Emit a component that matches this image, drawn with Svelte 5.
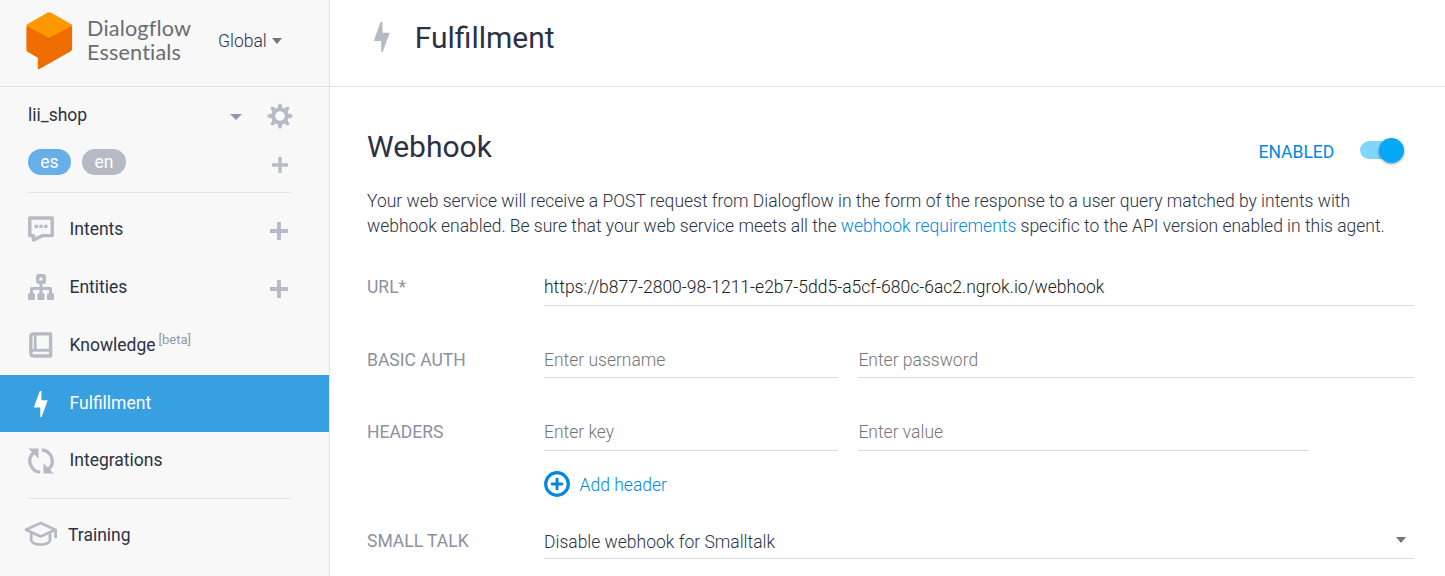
<script>
  const agentNav = [
    { id: 'intents', label: 'Intents', add: true },
    { id: 'entities', label: 'Entities', add: true },
    { id: 'knowledge', label: 'Knowledge', beta: true },
    { id: 'fulfillment', label: 'Fulfillment', active: true },
    { id: 'integrations', label: 'Integrations' }
  ];
  let url = $state('https://b877-2800-98-1211-e2b7-5dd5-a5cf-680c-6ac2.ngrok.io/webhook');
  const teeth = [0, 45, 90, 135, 180, 225, 270, 315];
</script>

{#snippet bolt()}
  <svg class="bolt" viewBox="0 0 16 30"><path d="M6.6 0H8.5v10.8h7.2L8.7 30H7.2V19H.2L0 18.2z" /></svg>
{/snippet}

{#snippet plus()}
  <svg class="plus" viewBox="0 0 18 18"><path d="M9 0v18M0 9h18" /></svg>
{/snippet}

{#snippet navIcon(id)}
  {#if id === 'intents'}
    <svg width="26" height="26" viewBox="0 0 26 26">
      <path d="M1.8 2h22.4v17.6H14.5L5.5 24v-4.4H1.8z" fill="none" stroke="currentColor" stroke-width="3.4" stroke-linejoin="round" />
      <path d="M6.6 8.8h3.4v3.3H6.6zM11.4 8.8h3.4v3.3h-3.4zM16.1 8.8h3.4v3.3h-3.4z" fill="currentColor" />
    </svg>
  {:else if id === 'entities'}
    <svg width="26" height="26" viewBox="0 0 26 26">
      <g fill="none" stroke="currentColor" stroke-width="3">
        <rect x="9.8" y="1.7" width="6.4" height="6.6" rx=".6" stroke-width="3.4" />
        <path d="M13 9v11M3.5 20v-5.5h19V20" stroke-linejoin="round" />
      </g>
      <g fill="currentColor">
        <rect x="0" y="19" width="7" height="7" rx="1.5" /><rect x="9.5" y="19" width="7" height="7" rx="1.5" /><rect x="19" y="19" width="7" height="7" rx="1.5" />
      </g>
    </svg>
  {:else if id === 'knowledge'}
    <svg width="26" height="26" viewBox="0 0 26 26">
      <g fill="none" stroke="currentColor">
        <path d="M22.6 1.9H5.2Q2.8 1.9 2.8 4.8v16q0 3.2 2.8 3.2h17z" stroke-width="3.4" stroke-linejoin="round" />
        <path d="M3 18.3h20" stroke-width="2.8" /><path d="M7.2 2v16" stroke-width="2.8" />
      </g>
    </svg>
  {:else if id === 'fulfillment'}
    {@render bolt()}
  {:else if id === 'integrations'}
    <svg width="26" height="26" viewBox="0 0 26 26">
      <g fill="none" stroke="currentColor" stroke-width="3.3">
        <path d="M12.2 24.2A11.3 11.3 0 0 1 6 4.2" /><path d="M13.8 1.8A11.3 11.3 0 0 1 20 21.8" />
      </g>
      <path d="M.3.4h10.2v10.3zM15.5 15.3v10.3h10.2z" fill="currentColor" />
    </svg>
  {/if}
{/snippet}

<div class="app">
  <aside>
    <header class="brand">
      <svg class="logo" width="47" height="58" viewBox="0 0 47 58">
        <path fill="#ef6c00" d="M.4 14.5v23.2q0 1.4 1.2 2.1l10.2 5.9V56q0 1.8 1.6 1L44.7 39.2q1.4-.8 1.4-2.4V14.5L23.2 5z" />
        <path fill="#ff9800" d="M.4 13.6q0-.8.8-1.3L21.8.6q1.5-.8 3 0l20.5 11.7q1.5.9 0 1.7L23.2 26.1 1 14.3z" />
      </svg>
      <div class="wordmark"><span>Dialogflow</span><span>Essentials</span></div>
      <button class="region">Global</button>
      <i class="caret region-caret"></i>
    </header>

    <div class="agent">
      <span class="agent-name">lii_shop</span>
      <i class="caret agent-caret"></i>
      <svg class="gear" width="26" height="26" viewBox="-13 -13 26 26">
        <circle r="6.7" fill="none" stroke="currentColor" stroke-width="3.8" />
        {#each teeth as angle}
          <path d="M-2.5-7.5L-1.5-12Q0-13.2 1.5-12L2.5-7.5z" transform="rotate({angle})" fill="currentColor" />
        {/each}
      </svg>
    </div>
    <div class="langs">
      <span class="pill es">es</span>
      <span class="pill en">en</span>
      {@render plus()}
    </div>

    <nav>
      {#each agentNav as item}
        <a href="#{item.id}" class="item {item.id}" class:active={item.active}>
          <span class="ico">{@render navIcon(item.id)}</span>
          <span class="label">{item.label}</span>
          {#if item.beta}<span class="beta">[beta]</span>{/if}
          {#if item.add}{@render plus()}{/if}
        </a>
      {/each}
    </nav>
    <a href="#training" class="item training">
      <span class="ico">
        <svg width="34" height="26" viewBox="0 0 34 26">
          <g fill="none" stroke="currentColor" stroke-width="2.8" stroke-linejoin="round">
            <path d="M2 8.7L16.6 2l14.7 6.7-14.7 6.7z" />
            <path d="M7.2 11v8.3q0 1.5 2.1 2.6 7.3 3.5 14.6 0 2.1-1.1 2.1-2.6V11" />
            <path d="M31.6 8v9" />
          </g>
        </svg>
      </span>
      <span class="label">Training</span>
    </a>
  </aside>

  <main>
    <header class="title">
      {@render bolt()}
      <h1>Fulfillment</h1>
    </header>

    <section>
      <div class="section-head">
        <h2>Webhook</h2>
        <span class="enabled">ENABLED</span>
        <span class="switch"><span class="knob"></span></span>
      </div>
      <p>
        Your web service will receive a POST request from Dialogflow in the form of the response to a user query matched by intents with<br />
        webhook enabled. Be sure that your web service meets all the <a href="#requirements">webhook requirements</a> specific to the API version enabled in this agent.
      </p>

      <div class="row url">
        <label for="url">URL*</label>
        <input id="url" class="wide" bind:value={url} />
      </div>
      <div class="row auth">
        <span class="lbl">BASIC AUTH</span>
        <input placeholder="Enter username" /><input class="second" placeholder="Enter password" />
      </div>
      <div class="row headers">
        <span class="lbl">HEADERS</span>
        <input placeholder="Enter key" /><input class="second short" placeholder="Enter value" />
      </div>
      <button class="add">
        <svg width="26" height="26" viewBox="0 0 26 26" fill="none" stroke="#0288e0">
          <circle cx="13" cy="13" r="11.3" stroke-width="3.2" />
          <path d="M13 8.1v9.8M8.1 13h9.8" stroke-width="2.9" stroke-linecap="round" />
        </svg>
        <span>Add header</span>
      </button>
      <div class="row talk">
        <span class="lbl">SMALL TALK</span>
        <div class="wide select"><span>Disable webhook for Smalltalk</span><i class="caret"></i></div>
      </div>
    </section>
  </main>
</div>

<style>
  :global(body) { overflow: hidden; background: #fff; }
  .app {
    display: flex; width: 1445px; height: 576px; overflow: hidden;
    font: 300 17.5px Roboto, "Liberation Sans", sans-serif; color: #2b3245;
  }
  .app :global(*) { box-sizing: border-box; }
  svg { display: block; flex: none; }
  button { border: 0; padding: 0; background: none; font: inherit; color: inherit; }
  a { text-decoration: none; color: inherit; }

  aside { width: 330px; flex: none; background: #f8f8f8; border-right: 1px solid #e3e3e3; }
  .brand { display: flex; height: 87px; border-bottom: 1px solid #e3e3e3; padding-left: 26px; }
  .logo { margin-top: 12px; }
  .wordmark {
    display: flex; flex-direction: column; width: 104px; margin: 16px 0 0 14px; white-space: nowrap;
    font: 400 21.6px/24px Lato, sans-serif; color: #696d71; font-variant-ligatures: none; letter-spacing: .17px;
  }
  .region { height: 26px; margin: 28px 0 0 27px; line-height: 26px; width: 49px; text-align: left; }
  .caret { border: 5.5px solid transparent; border-top: 6px solid #777; border-bottom: 0; }
  .region-caret { margin: 38px 0 0 5px; height: 6px; }

  .agent { display: flex; height: 58px; align-items: center; padding-left: 28px; font-weight: 400; }
  .agent-name { width: 202px; margin-top: -3px; }
  .agent-caret { border-top-color: #9097aa; border-left-width: 6px; border-right-width: 6px; margin-top: 2px; }
  .gear { color: #b6bac5; margin-left: 25px; }
  .langs {
    display: flex; height: 48px; margin: 0 38px 0 28px; padding-top: 4px;
    border-bottom: 1px solid #e3e3e3; gap: 11px;
  }
  .pill { height: 26px; border-radius: 13px; line-height: 26px; color: #fff; text-align: center; font-weight: 400; }
  .es { width: 43px; background: #66afe9; }
  .en { width: 44px; background: #b6bac5; }
  .plus { width: 18px; height: 18px; margin-left: auto; fill: none; stroke: #b6bac5; stroke-width: 3.8; }
  .langs .plus { width: 16px; height: 16px; margin: 8px 3px 0 auto; }

  nav { height: 306px; padding-top: 7px; }
  nav::after { content: ""; display: block; height: 1px; background: #e3e3e3; margin: 9px 38px 0 28px; }
  .item { display: flex; align-items: center; height: 58px; font-weight: 400; }
  .item .plus { margin: 4px 41px 0 auto; }
  .label { margin-top: -1px; }
  .knowledge { height: 59px; }
  .knowledge .ico { margin-top: -2px; }
  .fulfillment, .integrations { height: 57px; }
  .active { background: #38a0e1; color: #fff; }
  .ico { display: flex; width: 26px; margin: 0 16px 0 27.5px; color: #b6bac5; justify-content: center; }
  .active .ico { color: #fff; }
  .active .bolt { width: 14px; height: 26px; }
  .bolt { fill: currentColor; }
  .beta { font-size: 13px; color: #9097aa; margin: -12px 0 0 3px; }
  .training { height: 72px; }
  .training .ico { width: 34px; margin: -2px 10px 0 24px; }

  main { flex: 1; min-width: 0; }
  .title { display: flex; height: 87px; border-bottom: 1px solid #e3e3e3; padding-left: 44px; color: #b6bac5; }
  .title .bolt { width: 16px; height: 30px; margin-top: 22px; }
  h1, h2 { margin: 0; font-weight: 400; font-size: 30px; line-height: 38px; color: #2b3245; }
  h1 { margin: 19px 0 0 24.7px; }
  section { padding-left: 37px; }
  .section-head { display: flex; height: 102px; padding-top: 40px; }
  h2 { width: 891.5px; margin-top: 1px; }
  .enabled { width: 101.5px; line-height: 26px; margin-top: 12px; font-weight: 400; color: #0288e0; }
  .switch { display: flex; justify-content: flex-end; align-items: center; width: 44px; height: 18px; margin-top: 14px; border-radius: 9px; background: #81d4fa; }
  .knob { width: 25px; height: 25px; flex: none; border-radius: 50%; background: #03a9f4; box-shadow: 0 1px 3px rgb(0 0 0 / .4); }
  p { margin: 0; line-height: 25px; height: 79px; white-space: nowrap; letter-spacing: -.006px; }
  p a, .add { color: #0288e0; }

  .row { display: flex; }
  label, .lbl { width: 177px; font-weight: 400; color: #8b919f; }
  input, .select {
    width: 294px; border: 0; border-bottom: 1px solid #dcdcdc; outline: 0; padding: 0;
    background: none; font: inherit; color: #202020; border-radius: 0;
  }
  input::placeholder { color: #757575; opacity: 1; }
  .wide { width: 870px; }
  .second { width: 556px; margin-left: 20px; padding-left: .4px; }
  .short { width: 451px; }
  .url { height: 38px; line-height: 39px; }
  .url input { padding-top: 2px; }
  .auth { height: 36px; line-height: 37px; margin-top: 36px; }
  .auth input { padding-top: 2px; }
  .headers { height: 37px; line-height: 36px; margin-top: 36px; }
  .add { display: flex; align-items: center; gap: 9.6px; height: 26px; margin: 20px 0 0 177px; }
  .add span { padding-top: 2px; }
  .talk { height: 35px; line-height: 34px; margin-top: 27px; }
  .select { display: flex; align-items: center; color: #2b3245; }
  .select span { padding-top: 1px; }
  .select .caret { margin: -2px 8px 0 auto; }
</style>
